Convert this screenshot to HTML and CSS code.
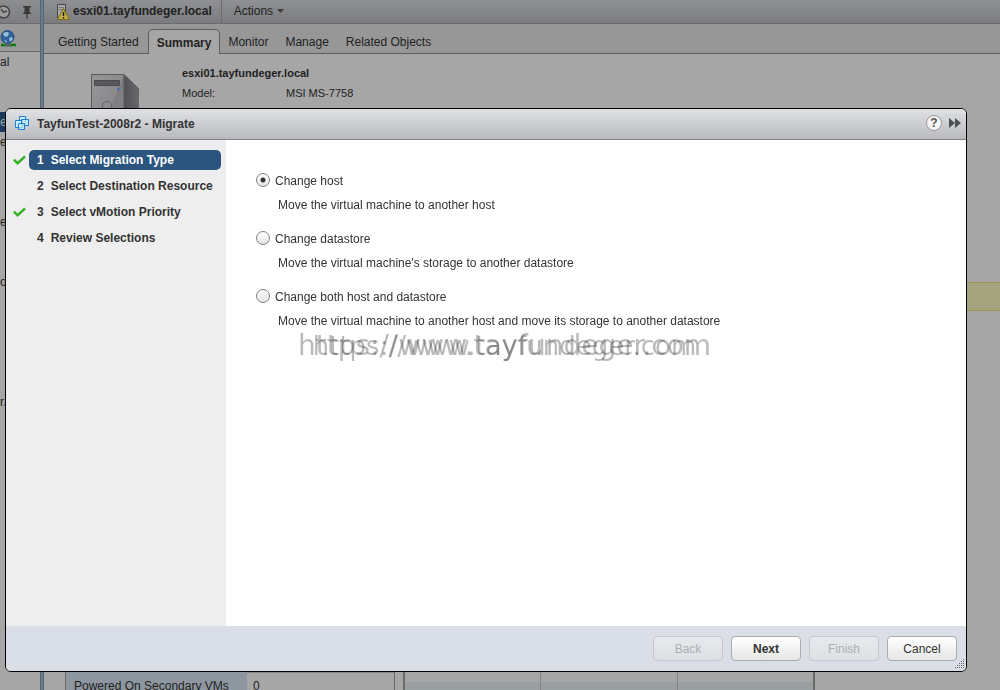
FILE: index.html
```html
<!DOCTYPE html>
<html lang="en">
<head>
    <meta charset="UTF-8">
    <meta name="viewport" content="width=device-width, initial-scale=1.0">
    <title>TayfunTest-2008r2 - Migrate</title>
    <link rel="stylesheet" href="styles.css">
</head>
<body>
    <div class="client">
        <div class="navigator">
            <div class="nav-header">
                <svg width="14" height="16" viewBox="0 0 14 16">
                    <circle cx="3.500" cy="8" r="6" fill="#9c9c9c" stroke="#444444" stroke-width="1.600"/>
                    <path d="M1 5l2.500 3.500L7 7" fill="none" stroke="#444444" stroke-width="1.400"/>
                </svg>
                <svg width="10" height="14" viewBox="0 0 10 14">
                    <path d="M1 1h8v1.500H7.500V7L9.500 9H.5L2.500 7V2.500H1z" fill="#3a3a3a"/>
                    <path d="M5 8v6" stroke="#3a3a3a" stroke-width="1.200"/>
                </svg>
            </div>
            <div class="nav-tools">
                <svg width="17" height="18" viewBox="0 0 17 18">
                    <circle cx="7.500" cy="7" r="6.500" fill="#2c64a0" stroke="#24507e"/>
                    <path d="M3 4c2-3 5-2 6-1l-1 3-3 1zM9 8l3-1 1 2-3 3zM4 10l3 1-1 2z" fill="#9dbcd3"/>
                    <path d="M1 15h15" stroke="#087a10" stroke-width="2.500"/>
                    <path d="M5 15h6" stroke="#54666d" stroke-width="3"/>
                </svg>
            </div>
            <ul class="tree">
                <li>al</li>
                <li></li>
                <li></li>
                <li class="selected">e</li>
                <li>e</li>
                <li></li>
                <li></li>
                <li></li>
                <li>e</li>
                <li></li>
                <li></li>
                <li>or</li>
                <li></li>
                <li></li>
                <li></li>
                <li></li>
                <li></li>
                <li>r.</li>
            </ul>
        </div>
        <div class="splitter"></div>
        <div class="main">
            <div class="title-bar">
                <svg width="14" height="18" viewBox="0 0 14 18">
                    <path d="M1.500 1.500h8v14h-8z" fill="#a9a9a9" stroke="#454545"/>
                    <path d="M3 4.500h5M3 6.500h5" stroke="#777777"/>
                    <path d="M7.500 5.500l6 11h-12z" fill="#c2ae45" stroke="#7c6a14"/>
                    <path d="M7.500 9v4M7.500 14v1.500" stroke="#1c1c1c" stroke-width="1.400"/>
                </svg>
                <h1>esxi01.tayfundeger.local</h1>
                <button type="button" class="actions">Actions
                    <svg width="7" height="4" viewBox="0 0 7 4"><path d="M0 0h7L3.500 4z" fill="#3c3c3c"/></svg>
                </button>
            </div>
            <nav class="tabs">
                <a href="#">Getting Started</a>
                <a href="#" class="active">Summary</a>
                <a href="#">Monitor</a>
                <a href="#">Manage</a>
                <a href="#">Related Objects</a>
            </nav>
            <div class="summary">
                <svg width="50" height="60" viewBox="0 0 50 60">
                    <defs>
                        <linearGradient id="front" x1="0" y1="0" x2="1" y2="1">
                            <stop offset="0" stop-color="#929294"/>
                            <stop offset=".5" stop-color="#7c7c7f"/>
                            <stop offset="1" stop-color="#8b8b8d"/>
                        </linearGradient>
                        <linearGradient id="side" x1="0" y1="0" x2="1" y2="0">
                            <stop offset="0" stop-color="#505055"/>
                            <stop offset="1" stop-color="#68686d"/>
                        </linearGradient>
                    </defs>
                    <path d="M33 .5L48 15v45H33z" fill="url(#side)"/>
                    <path d="M.5.5H33V60H.5z" fill="url(#front)" stroke="#5b5b5f"/>
                    <path d="M1 1h32L19 35 1 50z" fill="#a0a0a2" opacity=".4"/>
                    <path d="M.5.5H33L48 15" fill="none" stroke="#5b5b5f"/>
                    <path d="M3.500 6.500h25v5h-25z" fill="#58585b" stroke="#4b4b4e"/>
                    <circle cx="27.500" cy="15" r="1.500" fill="#3f6f9d"/>
                    <circle cx="16" cy="32" r="4.500" fill="#8e8e90" stroke="#626265"/>
                </svg>
                <div class="host-info">
                    <h2>esxi01.tayfundeger.local</h2>
                    <dl>
                        <dt>Model:</dt>
                        <dd>MSI MS-7758</dd>
                    </dl>
                </div>
            </div>
            <div class="alert"></div>
            <div class="panels">
                <table class="properties">
                    <tr>
                        <th>Powered On Secondary VMs</th>
                        <td>0</td>
                    </tr>
                </table>
                <div class="grid">
                    <div></div>
                    <div></div>
                    <div></div>
                </div>
            </div>
        </div>
    </div>

    <div class="overlay">
        <div class="dialog" role="dialog" aria-labelledby="dialog-title">
            <div class="dialog-header">
                <svg width="14" height="14" viewBox="0 0 14 14">
                    <g fill="#c9efff" stroke="#1b7fd6">
                        <path d="M4.500.5h6v7h-6z"/>
                        <path d="M.5 4.500h7v7h-7z"/>
                        <path d="M6.500 3.500h7v6h-7z" fill-opacity=".7"/>
                        <path d="M3.500 7.500h6v6h-6z" fill-opacity=".7"/>
                    </g>
                </svg>
                <h2 id="dialog-title">TayfunTest-2008r2 - Migrate</h2>
                <button type="button" class="help" aria-label="Help">?</button>
                <button type="button" class="expand" aria-label="Expand">
                    <svg width="12" height="10" viewBox="0 0 12 10"><path d="M0 0l6 5-6 5zM6 0l6 5-6 5z" fill="#4d4f52"/></svg>
                </button>
            </div>
            <div class="dialog-body">
                <ol class="steps">
                    <li class="done current">
                        <svg width="13" height="10" viewBox="0 0 14 10"><path d="M1 4.500l4 4L13 1" fill="none" stroke="#35b024" stroke-width="2.600"/></svg>
                        <span class="step"><b>1</b>Select Migration Type</span>
                    </li>
                    <li>
                        <span class="step"><b>2</b>Select Destination Resource</span>
                    </li>
                    <li class="done">
                        <svg width="13" height="10" viewBox="0 0 14 10"><path d="M1 4.500l4 4L13 1" fill="none" stroke="#35b024" stroke-width="2.600"/></svg>
                        <span class="step"><b>3</b>Select vMotion Priority</span>
                    </li>
                    <li>
                        <span class="step"><b>4</b>Review Selections</span>
                    </li>
                </ol>
                <form class="options" id="migrate-form">
                    <div class="option">
                        <input type="radio" id="host" name="type" checked>
                        <label for="host">Change host</label>
                        <p>Move the virtual machine to another host</p>
                    </div>
                    <div class="option">
                        <input type="radio" id="datastore" name="type">
                        <label for="datastore">Change datastore</label>
                        <p>Move the virtual machine's storage to another datastore</p>
                    </div>
                    <div class="option">
                        <input type="radio" id="both" name="type">
                        <label for="both">Change both host and datastore</label>
                        <p>Move the virtual machine to another host and move its storage to another datastore</p>
                    </div>
                    <div class="watermark">
                        <span class="wide">https://www.tayfundeger.com</span>
                        <span>https://www.tayfundeger.com</span>
                    </div>
                </form>
            </div>
            <div class="dialog-footer">
                <button type="button" disabled>Back</button>
                <button type="button" class="primary">Next</button>
                <button type="button" disabled>Finish</button>
                <button type="button">Cancel</button>
                <svg class="grip" width="10" height="10" viewBox="0 0 10 10">
                    <path d="M9.500 0v10M7.500 2v8M5.500 4v6M3.500 6v4M1.500 8v2" stroke="#666" stroke-dasharray="1 1"/>
                </svg>
            </div>
        </div>
    </div>
</body>
</html>
```

FILE: styles.css
```css
* {
    box-sizing: border-box;
}
body {
    margin: 0;
    height: 100vh;
    overflow: hidden;
    font-family: "Liberation Sans", Arial, sans-serif;
    font-size: 12px;
    line-height: 16px;
    color: #333333;
    background-color: #a6a6a6;
}
h1, h2, p, ul, ol, dl, dd {
    margin: 0;
    padding: 0;
}
h1, h2 {
    font-size: 12px;
}
svg {
    display: block;
    flex: none;
}
button {
    font-family: inherit;
    font-size: 12px;
    color: inherit;
}

/* client behind the dialog */
.client {
    display: flex;
    height: 100%;
    color: #222222;
}
.navigator {
    width: 40px;
    overflow: hidden;
}
.nav-header {
    display: flex;
    align-items: center;
    gap: 8px;
    height: 24px;
    border-bottom: 1px solid #6b6b6b;
    background: linear-gradient(#8c8d8f, #7d7e81);
}
.nav-tools {
    height: 28px;
    padding-top: 6px;
    border-bottom: 1px solid #6b6b6b;
    background-color: #999999;
}
.tree {
    list-style: none;
}
.tree li {
    height: 20px;
    line-height: 20px;
}
.tree .selected {
    background-color: #1c3a5c;
    color: #a6a6a6;
}
.splitter {
    width: 4px;
    border-left: 1px solid #59656f;
    border-right: 1px solid #59656f;
    background-color: #667c8f;
}
.main {
    flex: 1;
    display: flex;
    flex-direction: column;
}
.title-bar {
    display: flex;
    align-items: center;
    height: 24px;
    padding-left: 12px;
    border-bottom: 1px solid #6b6b6b;
    background: linear-gradient(#8f9093, #7b7c7f);
}
.title-bar h1 {
    padding: 0 9px 2px 3px;
}
.actions {
    display: flex;
    align-items: center;
    gap: 4px;
    height: 23px;
    padding: 0 12px 2px;
    border: none;
    border-left: 1px solid #6b6b6b;
    background: none;
}
.tabs {
    display: flex;
    align-items: flex-end;
    height: 30px;
    padding-left: 6px;
    background-color: #979797;
    box-shadow: inset 0 -1px #5e5e5e;
}
.tabs a {
    height: 24px;
    padding: 4px 9px 0 8px;
    color: #222222;
    text-decoration: none;
}
.tabs .active {
    height: 25px;
    padding: 5px 8px 0;
    border: 1px solid #5e5e5e;
    border-bottom: none;
    border-radius: 5px 5px 0 0;
    background-color: #a6a6a6;
    font-weight: bold;
}
.summary {
    display: flex;
    gap: 41px;
    height: 228px;
    padding: 20px 0 0 47px;
}
.host-info {
    margin-top: -9px;
    font-size: 11px;
}
.host-info h2 {
    font-size: 11px;
}
.host-info dl {
    display: flex;
    margin-top: 4px;
}
.host-info dt {
    width: 104px;
}
.alert {
    height: 29px;
    border: 1px solid #9c9650;
    border-right: none;
    background-color: #a5a47e;
}
.panels {
    display: flex;
    align-items: flex-start;
    gap: 8px;
    height: 18px;
    margin-top: auto;
    padding-left: 21px;
    overflow: hidden;
}
.properties {
    width: 330px;
    border: 1px solid #6b6b6b;
    border-top: none;
    border-spacing: 0;
}
.properties th,
.properties td {
    padding: 5px 8px;
    text-align: left;
    font-weight: normal;
}
.properties th {
    width: 181px;
    background-color: #8e979f;
}
.properties td {
    border-top: 1px solid #858585;
    padding-left: 6px;
}
.grid {
    display: flex;
    width: 412px;
    height: 26px;
    border: 1px solid #6b6b6b;
    border-width: 0 2px;
    background: linear-gradient(#a6a6a6 10px, #9a9fa2 10px);
}
.grid div {
    flex: 1;
    border-right: 1px solid #858585;
}
.grid div:last-child {
    border-right: none;
}

/* migrate dialog */
.overlay {
    position: fixed;
    inset: 0;
    display: flex;
    padding: 108px 33px 18px 5px;
}
.dialog {
    flex: 1;
    display: flex;
    flex-direction: column;
    border: 1px solid #000000;
    border-radius: 6px;
    overflow: hidden;
    background-color: #ffffff;
}
.dialog-header {
    display: flex;
    align-items: center;
    height: 31px;
    padding: 0 5px 2px 9px;
    border-bottom: 1px solid #7f8083;
    background: linear-gradient(#e0e1e4, #b9babe);
}
.dialog-header h2 {
    flex: 1;
    padding: 1px 0 0 8px;
}
.help {
    width: 16px;
    height: 16px;
    margin-right: 7px;
    padding: 0;
    border: 1px solid #999999;
    border-radius: 50%;
    background-color: #f4f4f4;
    font-size: 12px;
    font-weight: bold;
    line-height: 14px;
    color: #555555;
}
.expand {
    padding: 0;
    border: none;
    background: none;
}
.dialog-body {
    flex: 1;
    display: flex;
}
.steps {
    width: 220px;
    padding: 10px 5px 0 6px;
    background-color: #eeeeee;
    list-style: none;
    font-weight: bold;
}
.steps li {
    display: flex;
    align-items: center;
    justify-content: flex-end;
    gap: 3px;
    height: 20px;
    margin-bottom: 6px;
}
.step {
    width: 192px;
    padding-left: 8px;
    border-radius: 5px;
    line-height: 20px;
}
.step b {
    margin-right: 7px;
}
.current .step {
    background-color: #2b547e;
    color: #ffffff;
}
.options {
    position: relative;
    flex: 1;
    padding: 33px 30px 0;
}
.option {
    display: grid;
    grid-template-columns: 14px 1fr;
    column-gap: 5px;
    margin-bottom: 18px;
}
.option input {
    appearance: none;
    width: 14px;
    height: 14px;
    margin: 0;
    border: 1px solid #808080;
    border-radius: 50%;
    background: linear-gradient(#ffffff, #e4e4e4);
}
.option input:checked {
    background: radial-gradient(circle, #333333 2px, transparent 3px), linear-gradient(#ffffff, #e4e4e4);
}
.option p {
    grid-column: 1 / 3;
    padding: 8px 0 0 22px;
}
.watermark {
    position: absolute;
    top: 188px;
    left: 72px;
    display: grid;
    align-items: baseline;
    justify-items: center;
    font-family: "DejaVu Sans", sans-serif;
    font-size: 26px;
    line-height: 36px;
    color: rgba(0, 0, 0, 0.27);
    white-space: nowrap;
}
.watermark span {
    grid-area: 1 / 1;
}
.watermark .wide {
    font-size: 28px;
}
.dialog-footer {
    position: relative;
    display: flex;
    align-items: center;
    justify-content: flex-end;
    gap: 8px;
    height: 45px;
    padding: 0 9px;
    background-color: #dadee6;
}
.dialog-footer button {
    width: 70px;
    height: 25px;
    border: 1px solid #a9acb0;
    border-radius: 4px;
    background: linear-gradient(#ffffff, #e6e6e6);
}
.dialog-footer .primary {
    font-weight: bold;
}
.dialog-footer button:disabled {
    border-color: #c4c8cc;
    background: linear-gradient(#e6e9ed, #dde1e4);
    color: #abb0b4;
}
.grip {
    position: absolute;
    right: 2px;
    bottom: 2px;
}
```
